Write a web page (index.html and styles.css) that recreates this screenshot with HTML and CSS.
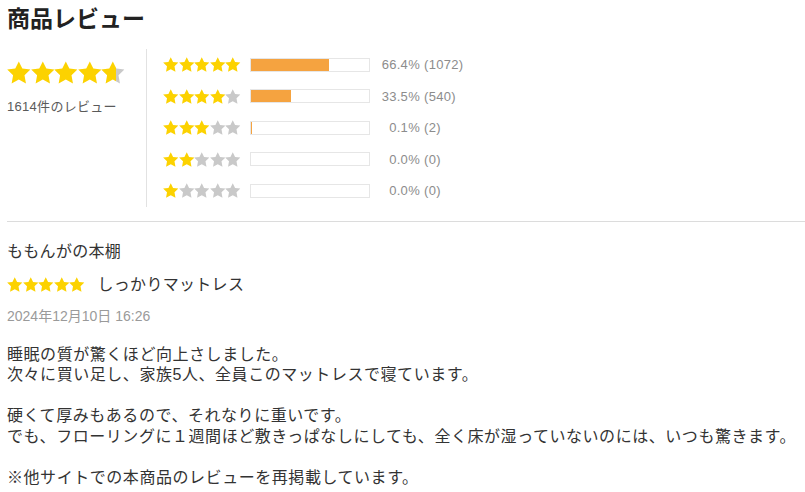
FILE: index.html
```html
<!DOCTYPE html>
<html lang="ja">
<head>
<meta charset="utf-8">
<title>商品レビュー</title>
<link rel="stylesheet" href="styles.css">
</head>
<body>
<svg class="defs" width="0" height="0" aria-hidden="true">
  <defs>
    <symbol id="star" viewBox="0 0 24 24">
      <polygon points="12,0.4 15.6,7.6 23.8,8.7 17.8,14.4 19.3,22.8 12,18.8 4.7,22.8 6.2,14.4 0.2,8.7 8.4,7.6"/>
    </symbol>
    <linearGradient id="part" x1="0" x2="1" y1="0" y2="0">
      <stop offset="0.62" stop-color="#fcd200"/>
      <stop offset="0.62" stop-color="#c9c9c9"/>
    </linearGradient>
  </defs>
</svg>

<h1 class="title">商品レビュー</h1>

<section class="summary">
  <div class="overall">
    <div class="stars stars-lg">
      <svg class="on"><use href="#star"/></svg><svg class="on"><use href="#star"/></svg><svg class="on"><use href="#star"/></svg><svg class="on"><use href="#star"/></svg><svg class="part"><use href="#star"/></svg>
    </div>
    <div class="count">1614件のレビュー</div>
  </div>
  <div class="dist">
    <div class="row">
      <div class="stars stars-sm"><svg class="on"><use href="#star"/></svg><svg class="on"><use href="#star"/></svg><svg class="on"><use href="#star"/></svg><svg class="on"><use href="#star"/></svg><svg class="on"><use href="#star"/></svg></div>
      <div class="bar"><div class="fill" style="width:66.4%"></div></div>
      <span class="pct">66.4%</span><span class="num">(1072)</span>
    </div>
    <div class="row">
      <div class="stars stars-sm"><svg class="on"><use href="#star"/></svg><svg class="on"><use href="#star"/></svg><svg class="on"><use href="#star"/></svg><svg class="on"><use href="#star"/></svg><svg class="off"><use href="#star"/></svg></div>
      <div class="bar"><div class="fill" style="width:33.5%"></div></div>
      <span class="pct">33.5%</span><span class="num">(540)</span>
    </div>
    <div class="row">
      <div class="stars stars-sm"><svg class="on"><use href="#star"/></svg><svg class="on"><use href="#star"/></svg><svg class="on"><use href="#star"/></svg><svg class="off"><use href="#star"/></svg><svg class="off"><use href="#star"/></svg></div>
      <div class="bar"><div class="fill" style="width:1px"></div></div>
      <span class="pct">0.1%</span><span class="num">(2)</span>
    </div>
    <div class="row">
      <div class="stars stars-sm"><svg class="on"><use href="#star"/></svg><svg class="on"><use href="#star"/></svg><svg class="off"><use href="#star"/></svg><svg class="off"><use href="#star"/></svg><svg class="off"><use href="#star"/></svg></div>
      <div class="bar"><div class="fill" style="width:0%"></div></div>
      <span class="pct">0.0%</span><span class="num">(0)</span>
    </div>
    <div class="row">
      <div class="stars stars-sm"><svg class="on"><use href="#star"/></svg><svg class="off"><use href="#star"/></svg><svg class="off"><use href="#star"/></svg><svg class="off"><use href="#star"/></svg><svg class="off"><use href="#star"/></svg></div>
      <div class="bar"><div class="fill" style="width:0%"></div></div>
      <span class="pct">0.0%</span><span class="num">(0)</span>
    </div>
  </div>
</section>

<article class="review">
  <div class="author">ももんがの本棚</div>
  <div class="headline">
    <div class="stars stars-sm"><svg class="on"><use href="#star"/></svg><svg class="on"><use href="#star"/></svg><svg class="on"><use href="#star"/></svg><svg class="on"><use href="#star"/></svg><svg class="on"><use href="#star"/></svg></div>
    <span class="review-title">しっかりマットレス</span>
  </div>
  <div class="date">2024年12月10日 16:26</div>
  <p class="body">睡眠の質が驚くほど向上さしました。<br>次々に買い足し、家族5人、全員このマットレスで寝ています。<br><br>硬くて厚みもあるので、それなりに重いです。<br>でも、フローリングに１週間ほど敷きっぱなしにしても、全く床が湿っていないのには、いつも驚きます。<br><br>※他サイトでの本商品のレビューを再掲載しています。</p>
</article>
</body>
</html>
```

FILE: styles.css
```css
* { box-sizing: border-box; }

html, body {
  margin: 0;
  background: #fff;
}

body {
  padding: 0 0 0 7px;
  font-family: "Liberation Sans", "Noto Sans CJK JP", sans-serif;
  color: #333;
  overflow: hidden;
}

.defs {
  position: absolute;
  width: 0;
  height: 0;
}

.title {
  margin: 0;
  padding-top: 3px;
  font-size: 23px;
  line-height: 32px;
  font-weight: 700;
  color: #222;
}

.summary {
  display: flex;
  margin-top: 14px;
  padding-bottom: 14px;
  border-bottom: 1px solid #dcdcdc;
}

.overall {
  width: 140px;
  padding-top: 12px;
  border-right: 1px solid #e2e2e2;
}

.stars {
  display: flex;
  fill: #fcd200;
}

.stars svg { display: block; }
.stars .off { fill: #c9c9c9; }
.stars .part { fill: url(#part); }

.stars-lg svg {
  width: 23.6px;
  height: 23.6px;
}

.stars-sm svg {
  width: 15.5px;
  height: 15.5px;
}

.count {
  margin-top: 13px;
  font-size: 13px;
  line-height: 18px;
  color: #5a5a5a;
  letter-spacing: 0.3px;
}

.dist {
  padding-left: 16px;
}

.row {
  display: flex;
  align-items: center;
  height: 31.5px;
  font-size: 13px;
  color: #8c8c8c;
  letter-spacing: 0.3px;
}

.row .stars-sm { width: 87px; }

.bar {
  width: 120px;
  height: 14px;
  border: 1px solid #e6e6e6;
  background: #fff;
}

.fill {
  height: 100%;
  background: #f5a340;
}

.pct {
  width: 50px;
  text-align: right;
}

.num {
  margin-left: 4px;
}

.review {
  padding-top: 19px;
}

.author {
  font-size: 16px;
  line-height: 22px;
  letter-spacing: 0.3px;
  color: #333;
}

.headline {
  display: flex;
  align-items: center;
  gap: 13px;
  margin-top: 11px;
}

.review-title {
  font-size: 16px;
  line-height: 22px;
  letter-spacing: 0.3px;
  color: #333;
}

.date {
  margin-top: 11px;
  font-size: 14px;
  line-height: 18px;
  color: #9a9a9a;
}

.body {
  margin: 20px 0 0;
  font-size: 16px;
  line-height: 20.6px;
  letter-spacing: 0.55px;
  color: #333;
}
```
